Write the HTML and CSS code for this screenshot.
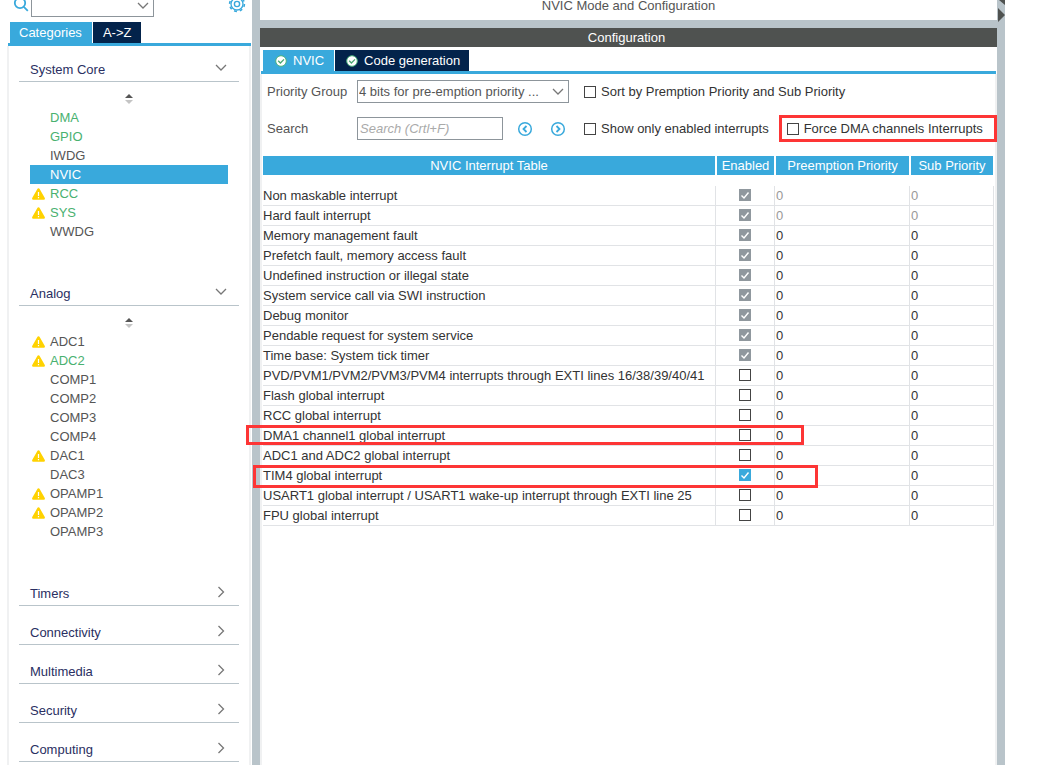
FILE: index.html
```html
<!DOCTYPE html>
<html lang="en">
<head>
<meta charset="utf-8">
<title>NVIC Mode and Configuration</title>
<link rel="stylesheet" href="styles.css">
</head>
<body>
<svg class="defs" aria-hidden="true">
  <symbol id="warn" viewBox="0 0 13 12"><path d="M6.5 .3Q7.3.3 7.8 1.2L12.8 10Q13.3 11.6 11.8 11.7H1.2Q-.3 11.6.2 10L5.2 1.2Q5.7.3 6.500.3z" fill="#ffd200"/><path d="M6.500 4v4M6.500 9v1.300" stroke="#fff" stroke-width="1.200"/></symbol>
  <symbol id="down" viewBox="0 0 12 8"><path d="M1 1l5 5 5-5" fill="none" stroke="#777" stroke-width="1.300"/></symbol>
  <symbol id="right" viewBox="0 0 8 12"><path d="M1.500 1l5 5-5 5" fill="none" stroke="#777" stroke-width="1.300"/></symbol>
  <symbol id="sort" viewBox="0 0 8 10"><path d="M4 0l4 4H0z" fill="#555"/><path d="M0 6h8l-4 4z" fill="#c4c4c4"/></symbol>
  <symbol id="ok" viewBox="0 0 12 12"><circle cx="6" cy="6" r="5.300" fill="#fff" stroke="#49b27b" stroke-width="1"/><path d="M3.200 5.800l2.200 2.200 3.600-3.600" fill="none" stroke="#49a66f" stroke-width="1.300"/></symbol>
</svg>
<div class="app">
  <aside class="sidebar">
    <div class="toolbar">
      <svg class="search-icon" width="16" height="16" viewBox="0 0 16 16" fill="none" stroke="#39a9dc" stroke-width="1.800"><circle cx="7" cy="7" r="5.200"/><path d="M10.800 10.800l4 4"/></svg>
      <span class="combo combo-search"><select aria-label="Search peripheral"><option></option></select><svg width="12" height="8"><use href="#down"/></svg></span>
      <button class="gear" aria-label="Settings"><svg width="18" height="18" viewBox="0 0 18 18" fill="none" stroke="#39a9dc"><circle cx="9" cy="9" r="2.600" stroke-width="1.400"/><circle cx="9" cy="9" r="6" stroke-width="1.300"/><circle cx="9" cy="9" r="7.400" stroke-width="1.600" stroke-dasharray="2.900 2.911"/></svg></button>
    </div>
    <div class="tabs side-tabs"><button class="tab active">Categories</button><button class="tab">A-&gt;Z</button></div>
    <nav class="categories">
      <section>
        <button class="category">System Core<svg width="12" height="8"><use href="#down"/></svg></button>
        <button class="sorter" aria-label="Sort System Core"><svg width="8" height="10"><use href="#sort"/></svg></button>
        <ul class="items">
          <li><a class="used" href="#">DMA</a></li>
          <li><a class="used" href="#">GPIO</a></li>
          <li><a href="#">IWDG</a></li>
          <li><a class="selected" href="#">NVIC</a></li>
          <li><a class="used" href="#"><svg width="13" height="12"><use href="#warn"/></svg>RCC</a></li>
          <li><a class="used" href="#"><svg width="13" height="12"><use href="#warn"/></svg>SYS</a></li>
          <li><a href="#">WWDG</a></li>
        </ul>
      </section>
      <section>
        <button class="category">Analog<svg width="12" height="8"><use href="#down"/></svg></button>
        <button class="sorter" aria-label="Sort Analog"><svg width="8" height="10"><use href="#sort"/></svg></button>
        <ul class="items">
          <li><a href="#"><svg width="13" height="12"><use href="#warn"/></svg>ADC1</a></li>
          <li><a class="used" href="#"><svg width="13" height="12"><use href="#warn"/></svg>ADC2</a></li>
          <li><a href="#">COMP1</a></li>
          <li><a href="#">COMP2</a></li>
          <li><a href="#">COMP3</a></li>
          <li><a href="#">COMP4</a></li>
          <li><a href="#"><svg width="13" height="12"><use href="#warn"/></svg>DAC1</a></li>
          <li><a href="#">DAC3</a></li>
          <li><a href="#"><svg width="13" height="12"><use href="#warn"/></svg>OPAMP1</a></li>
          <li><a href="#"><svg width="13" height="12"><use href="#warn"/></svg>OPAMP2</a></li>
          <li><a href="#">OPAMP3</a></li>
        </ul>
      </section>
      <section><button class="category">Timers<svg width="12" height="12"><use href="#right"/></svg></button></section>
      <section><button class="category">Connectivity<svg width="12" height="12"><use href="#right"/></svg></button></section>
      <section><button class="category">Multimedia<svg width="12" height="12"><use href="#right"/></svg></button></section>
      <section><button class="category">Security<svg width="12" height="12"><use href="#right"/></svg></button></section>
      <section><button class="category">Computing<svg width="12" height="12"><use href="#right"/></svg></button></section>
    </nav>
  </aside>
  <div class="splitter"></div>
  <main class="main">
    <div class="mode-title">NVIC Mode and Configuration</div>
    <h1 class="config-title">Configuration</h1>
    <div class="tabs main-tabs">
      <button class="tab active"><svg width="12" height="12"><use href="#ok"/></svg>NVIC</button><button class="tab"><svg width="12" height="12"><use href="#ok"/></svg>Code generation</button>
    </div>
    <div class="panel">
      <div class="control-row first">
        <label class="caption" for="group">Priority Group</label>
        <span class="combo combo-group"><select id="group"><option>4 bits for pre-emption priority ...</option></select><svg width="12" height="8"><use href="#down"/></svg></span>
        <label class="check"><input type="checkbox">Sort by Premption Priority and Sub Priority</label>
      </div>
      <div class="control-row second">
        <label class="caption" for="search">Search</label>
        <input class="search" id="search" type="text" placeholder="Search (Crtl+F)">
        <button class="step" aria-label="Previous match"><svg width="16" height="16" viewBox="0 0 16 16" fill="none" stroke="#39a9dc" stroke-width="1.500"><circle cx="8" cy="8" r="6.300"/><path stroke-width="1.800" d="M9.500 5L6.500 8l3 3"/></svg></button>
        <button class="step" aria-label="Next match"><svg width="16" height="16" viewBox="0 0 16 16" fill="none" stroke="#39a9dc" stroke-width="1.500"><circle cx="8" cy="8" r="6.300"/><path stroke-width="1.800" d="M6.500 5l3 3-3 3"/></svg></button>
        <label class="check"><input type="checkbox">Show only enabled interrupts</label>
        <label class="check force"><input type="checkbox">Force DMA channels Interrupts</label>
      </div>
      <table class="interrupts">
        <colgroup><col><col class="c-enabled"><col class="c-preempt"><col class="c-sub"></colgroup>
        <thead><tr><th>NVIC Interrupt Table</th><th>Enabled</th><th>Preemption Priority</th><th>Sub Priority</th></tr></thead>
        <tbody>
          <tr class="locked"><td>Non maskable interrupt</td><td class="tick"><input type="checkbox" aria-label="Non maskable interrupt" checked disabled></td><td>0</td><td>0</td></tr>
          <tr class="locked"><td>Hard fault interrupt</td><td class="tick"><input type="checkbox" aria-label="Hard fault interrupt" checked disabled></td><td>0</td><td>0</td></tr>
          <tr><td>Memory management fault</td><td class="tick"><input type="checkbox" aria-label="Memory management fault" checked disabled></td><td>0</td><td>0</td></tr>
          <tr><td>Prefetch fault, memory access fault</td><td class="tick"><input type="checkbox" aria-label="Prefetch fault" checked disabled></td><td>0</td><td>0</td></tr>
          <tr><td>Undefined instruction or illegal state</td><td class="tick"><input type="checkbox" aria-label="Undefined instruction" checked disabled></td><td>0</td><td>0</td></tr>
          <tr><td>System service call via SWI instruction</td><td class="tick"><input type="checkbox" aria-label="System service call" checked disabled></td><td>0</td><td>0</td></tr>
          <tr><td>Debug monitor</td><td class="tick"><input type="checkbox" aria-label="Debug monitor" checked disabled></td><td>0</td><td>0</td></tr>
          <tr><td>Pendable request for system service</td><td class="tick"><input type="checkbox" aria-label="Pendable request" checked disabled></td><td>0</td><td>0</td></tr>
          <tr><td>Time base: System tick timer</td><td class="tick"><input type="checkbox" aria-label="System tick timer" checked disabled></td><td>0</td><td>0</td></tr>
          <tr><td>PVD/PVM1/PVM2/PVM3/PVM4 interrupts through EXTI lines 16/38/39/40/41</td><td class="tick"><input type="checkbox" aria-label="PVD/PVM interrupts"></td><td>0</td><td>0</td></tr>
          <tr><td>Flash global interrupt</td><td class="tick"><input type="checkbox" aria-label="Flash global interrupt"></td><td>0</td><td>0</td></tr>
          <tr><td>RCC global interrupt</td><td class="tick"><input type="checkbox" aria-label="RCC global interrupt"></td><td>0</td><td>0</td></tr>
          <tr class="marked"><td>DMA1 channel1 global interrupt<span class="mark mark-dma"></span></td><td class="tick"><input type="checkbox" aria-label="DMA1 channel1 global interrupt"></td><td>0</td><td>0</td></tr>
          <tr><td>ADC1 and ADC2 global interrupt</td><td class="tick"><input type="checkbox" aria-label="ADC1 and ADC2 global interrupt"></td><td>0</td><td>0</td></tr>
          <tr class="marked"><td>TIM4 global interrupt<span class="mark mark-tim"></span></td><td class="tick"><input type="checkbox" aria-label="TIM4 global interrupt" checked></td><td>0</td><td>0</td></tr>
          <tr><td>USART1 global interrupt / USART1 wake-up interrupt through EXTI line 25</td><td class="tick"><input type="checkbox" aria-label="USART1 global interrupt"></td><td>0</td><td>0</td></tr>
          <tr><td>FPU global interrupt</td><td class="tick"><input type="checkbox" aria-label="FPU global interrupt"></td><td>0</td><td>0</td></tr>
        </tbody>
      </table>
    </div>
  </main>
  <div class="splitter"><svg width="8" height="22" viewBox="0 0 8 22" fill="#4f5250"><path d="M8 0v5L2 0zM1 8l7 7-7 7z"/></svg></div>
</div>
</body>
</html>
```
FILE: styles.css
```css
:root {
  --blue: #39a9dc;
  --navy: #03234b;
  --steel: #b9c4ca;
  --dark: #4f5250;
  --line: #e1e3e6;
  --edge: #f0f1f2;
  --red: #fd3535;
}

* { box-sizing: border-box; }

body {
  margin: 0;
  background: #fff;
  color: #333;
  font: 13px/16px "Liberation Sans", Arial, sans-serif;
}

button, select, input {
  margin: 0;
  padding: 0;
  border: 0;
  border-radius: 0;
  background: none;
  color: inherit;
  font: inherit;
}

svg { display: block; flex: none; }
.defs { position: absolute; width: 0; height: 0; }

.app {
  display: grid;
  grid-template-columns: 252px 8px minmax(0, 1fr) 8px;
  height: 100vh;
  padding-right: 49px;
  overflow: hidden;
}

.splitter { background: var(--steel); }

/* Sidebar */
.sidebar { display: flex; flex-direction: column; padding-right: 1px; }

.toolbar {
  display: flex;
  align-items: flex-end;
  height: 17px;
  padding: 0 5px 0 13px;
  overflow: hidden;
}
.search-icon { margin-bottom: 5px; }
.gear { margin: 0 0 4px auto; }

.combo { position: relative; display: block; }
.combo select {
  display: block;
  width: 100%;
  height: 23px;
  padding-left: 1px;
  border: 1px solid #8d959b;
  appearance: none;
  color: #555;
}
.combo svg { position: absolute; right: 5px; top: 8px; pointer-events: none; }
.combo-search { width: 123px; margin-left: 2px; }

.tabs {
  display: flex;
  gap: 1px;
  border-bottom: 3px solid var(--blue);
}
.tab {
  display: flex;
  align-items: center;
  gap: 6px;
  height: 21px;
  padding: 0 10px;
  background: var(--navy);
  color: #fff;
}
.tab.active { background: var(--blue); }
.side-tabs { margin: 5px 0 0 8px; padding-left: 2px; }
.side-tabs .active { padding: 0 10px 0 9px; }

.categories {
  flex: 1;
  margin-left: 7px;
  padding: 0 10px;
  border: solid var(--edge);
  border-width: 0 2px;
}
section + section { margin-top: 3px; }

.category {
  display: flex;
  align-items: center;
  justify-content: space-between;
  width: 100%;
  padding: 16px 12px 3px 11px;
  border-bottom: 1px solid var(--steel);
  color: #2a2f62;
}
.category svg { margin-bottom: 4px; }

.sorter {
  display: flex;
  align-items: flex-end;
  justify-content: center;
  width: 100%;
  height: 26px;
  padding: 0 1px 4px 0;
}

.items { margin: 0; padding: 0 11px 26px; list-style: none; }
.items a {
  position: relative;
  display: block;
  height: 19px;
  padding-left: 20px;
  color: #555;
  line-height: 19px;
  text-decoration: none;
}
.items svg { position: absolute; left: 2px; top: 4px; }
.items .used { color: #49b170; }
.items .selected { background: var(--blue); color: #fff; }

/* Main area */
.main { display: flex; flex-direction: column; position: relative; z-index: 1; }

.mode-title {
  height: 20px;
  color: #555;
  line-height: 12px;
  text-align: center;
}
.config-title {
  margin: 0;
  padding-right: 4px;
  border-top: 8px solid var(--steel);
  background: var(--dark);
  color: #fff;
  font: inherit;
  line-height: 19px;
  text-align: center;
}

.main-tabs { margin: 3px 1px 0; padding-left: 2px; }
.main-tabs .tab { padding: 0 10px 0 12px; }
.main-tabs .tab + .tab { padding: 0 9px 0 11px; }

.panel {
  flex: 1;
  padding: 6px 1px 0 1px;
  border: solid var(--edge);
  border-width: 0 2px;
}

.control-row { display: flex; align-items: center; padding-left: 4px; }
.second { height: 27px; margin: 12px -3px 14px 0; }
.caption { width: 90px; color: #555; }
.combo-group { width: 212px; margin-right: 15px; }

.search {
  width: 146px;
  height: 23px;
  margin-right: 14px;
  padding: 0 2px;
  border: 1px solid #8d959b;
}
.search::placeholder { color: #aaa; font-style: italic; opacity: 1; }
.step { margin-right: 17px; }
.step + .check { margin-left: 1px; }

.check { display: flex; align-items: center; gap: 5px; white-space: nowrap; }
.force {
  flex: 1;
  height: 27px;
  margin-left: 10px;
  padding-left: 5px;
  border: 3px solid var(--red);
}

input[type="checkbox"] {
  display: block;
  flex: none;
  width: 12px;
  height: 12px;
  border: 1px solid #444;
  appearance: none;
  background: #fff;
}
input[type="checkbox"]:checked {
  border: 0;
  background: var(--blue) url("data:image/svg+xml,%3Csvg xmlns='http://www.w3.org/2000/svg' viewBox='0 0 12 12'%3E%3Cpath d='M2.500 6.500l2.500 2.500 4.500-5.500' fill='none' stroke='white' stroke-width='1.400'/%3E%3C/svg%3E");
}
input[type="checkbox"]:disabled { background-color: #90989e; }

/* Interrupt table */
.interrupts {
  width: 100%;
  table-layout: fixed;
  border-spacing: 0;
}
.c-enabled { width: 59px; }
.c-preempt { width: 135px; }
.c-sub { width: 84px; }

.interrupts th {
  height: 19px;
  padding: 0;
  border: solid #fff;
  border-width: 0 1px;
  background: var(--blue);
  color: #fff;
  font-weight: normal;
  line-height: 19px;
}
.interrupts th:first-child { border-left: 0; }
.interrupts tbody::before { content: ""; display: block; height: 11px; }
.interrupts td {
  height: 20px;
  padding: 0 0 0 1px;
  border: solid var(--line);
  border-width: 0 1px 1px 0;
  line-height: 19px;
  white-space: nowrap;
}
.interrupts td:first-child { padding-left: 0; }
.interrupts .tick { padding: 0 1px 1px 0; }
.tick input { margin: 0 auto; }
.locked td + td { color: #999; }

.marked { position: relative; }
.mark {
  position: absolute;
  border: 3px solid var(--red);
  pointer-events: none;
}
.mark-dma { left: -17px; right: 190px; top: -1px; height: 20px; }
.mark-tim { left: -10px; right: 176px; top: -1px; height: 23px; }
```
